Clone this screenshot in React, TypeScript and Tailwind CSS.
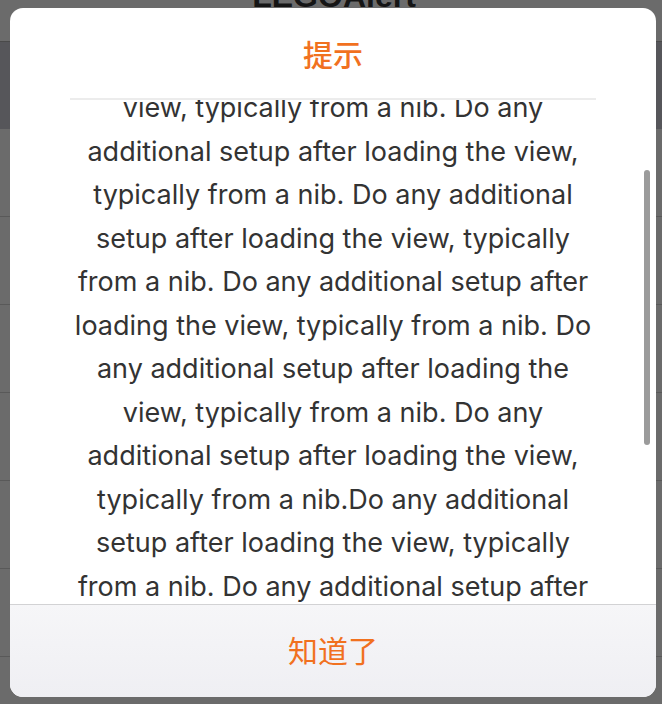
const lines = [
  'view, typically from a nib. Do any',
  'additional setup after loading the view,',
  'typically from a nib. Do any additional',
  'setup after loading the view, typically',
  'from a nib. Do any additional setup after',
  'loading the view, typically from a nib. Do',
  'any additional setup after loading the',
  'view, typically from a nib. Do any',
  'additional setup after loading the view,',
  'typically from a nib.Do any additional',
  'setup after loading the view, typically',
  'from a nib. Do any additional setup after',
  'loading the view, typically from a nib.',
]

function Backdrop() {
  const rows = [0, 1, 2, 3, 4, 5, 6]
  return (
    <div className="w-[662px] h-[704px] overflow-hidden bg-[#6b6b6b]">
      <div className="h-[42px] overflow-hidden flex justify-center border-b border-[#4a4a4a]">
        <div className="mt-[-20px] ml-[6px] text-[32px] leading-[32px] font-bold text-[#151515] font-['Liberation_Sans',sans-serif]">
          LEGOAlert
        </div>
      </div>
      <div className="h-[87px] bg-[#56565a]" />
      {rows.map((r) => (
        <div key={r} className="h-[88px] border-b border-[#595959]" />
      ))}
    </div>
  )
}

export default function App() {
  return (
    <div className="relative w-[662px] h-[704px] overflow-hidden font-['Inter','Noto_Sans_CJK_SC',sans-serif]">
      <Backdrop />
      <div className="absolute left-[10px] top-[8px] w-[646px] h-[689px] rounded-[13px] bg-white overflow-hidden flex flex-col">
        <div className="h-[92px] flex flex-col">
          <div className="flex-1 flex items-center justify-center pt-[4px] text-[30px] font-medium text-[#f1711f]">
            提示
          </div>
          <div className="mx-[60px] h-[2px] bg-[#ececec]" />
        </div>
        <div className="relative flex-1 overflow-hidden">
          <div className="mt-[-14px] flex flex-col items-center text-[27px] leading-[43.5px] text-[#333333]">
            {lines.map((l, i) => (
              <div key={i} className="whitespace-nowrap">{l}</div>
            ))}
          </div>
          <div className="absolute right-[6px] top-[70px] w-[6px] h-[275px] rounded-full bg-[#9b9b9b]" />
        </div>
        <div className="h-[93px] border-t border-[#d2d2d4] bg-gradient-to-b from-[#f6f6f8] to-[#efeff3] flex items-center justify-center pt-[1px] text-[30px] text-[#f1711f]">
          知道了
        </div>
      </div>
    </div>
  )
}
